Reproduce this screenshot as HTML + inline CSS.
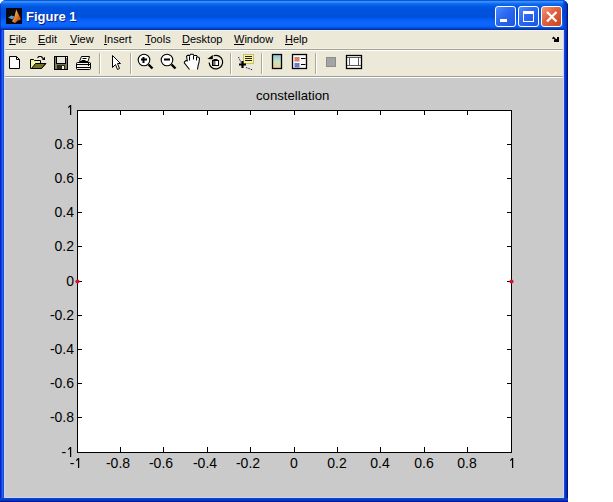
<!DOCTYPE html>
<html><head><meta charset="utf-8">
<style>
*{margin:0;padding:0;box-sizing:border-box}
html,body{width:613px;height:502px;background:#fff;overflow:hidden;position:relative;font-family:"Liberation Sans",sans-serif}
.a{position:absolute}
#win{left:0;top:0;width:568px;height:502px;background:#0831D9;border-radius:6px 6px 0 0;overflow:hidden}
#title{left:0;top:0;width:568px;height:30px;background:linear-gradient(to bottom,#0A58DA 0px,#0A58DA 1px,#3A90FF 1px,#3A90FF 2px,#2C82FA 2px,#2C82FA 3px,#1670F0 3px,#1670F0 4px,#0A66EA 4px,#0A66EA 5px,#0460E6 5px,#0460E6 6px,#025AE4 6px,#025AE4 7px,#0056E2 7px,#0056E2 8px,#0054E0 8px,#0054E0 9px,#0053DF 9px,#0053DF 10px,#0052DE 10px,#0052DE 11px,#0052DE 11px,#0052DE 12px,#0051DD 12px,#0051DD 13px,#0051DD 13px,#0051DD 14px,#0050DC 14px,#0050DC 15px,#0050DC 15px,#0050DC 16px,#0050DE 16px,#0050DE 17px,#0052E2 17px,#0052E2 18px,#0256E8 18px,#0256E8 19px,#045CF0 19px,#045CF0 20px,#0862F8 20px,#0862F8 21px,#0A64FC 21px,#0A64FC 22px,#0A66FF 22px,#0A66FF 23px,#0A66FF 23px,#0A66FF 24px,#0A66FF 24px,#0A66FF 25px,#0A64FC 25px,#0A64FC 26px,#0860F6 26px,#0860F6 27px,#0656E6 27px,#0656E6 28px,#0444C8 28px,#0444C8 29px,#0A2E98 29px,#0A2E98 30px)}
#ttext{left:26px;top:9px;color:#fff;font-weight:bold;font-size:13px;line-height:16px;white-space:nowrap;text-shadow:1px 1px 0 #0A1E82}
.frL{top:30px;height:472px;width:4px;left:0;background:linear-gradient(to right,#0024C8 0,#0024C8 1px,#0C44E4 1px,#0C44E4 2px,#2262F4 2px,#2262F4 3px,#1A4CC8 3px)}
.frR{top:30px;height:472px;width:4px;left:564px;background:linear-gradient(to right,#1048E0 0,#1048E0 1px,#0838D0 1px,#0838D0 2px,#0028B8 2px,#0028B8 3px,#001080 3px)}
.frB{top:498px;height:4px;width:568px;left:0;background:linear-gradient(to bottom,#0A44CC 0,#0A44CC 1px,#0840C8 1px,#0840C8 2px,#0830B8 2px,#0830B8 3px,#001898 3px)}
#client{left:4px;top:30px;width:560px;height:468px;background:#CACACA;border:1px solid #C8D4FA;border-top-color:#F4F6FF}
#menu{left:5px;top:31px;width:558px;height:18px;background:#ECE9D8}
.mi{top:33px;font-size:11px;line-height:13px;color:#000;white-space:nowrap}
.mi u{text-decoration:underline;text-underline-offset:1px;text-decoration-thickness:1px}
#sep1{left:5px;top:48px;width:558px;height:1px;background:#F2EFE4}
#sep2{left:5px;top:49px;width:558px;height:1px;background:#A5A294}
#sep3{left:5px;top:50px;width:558px;height:1px;background:#FFFFFF}
#tool{left:5px;top:51px;width:558px;height:25px;background:#ECE9D8}
#sep4{left:5px;top:76px;width:558px;height:1px;background:#A0A09A}
#sep5{left:5px;top:77px;width:558px;height:1px;background:#FFFFFF}
#fig{left:5px;top:78px;width:558px;height:419px;background:#CACACA}
.tsep{top:53px;width:2px;height:21px;border-left:1px solid #ACA899;border-right:1px solid #FFFFFF}
#axes{left:77px;top:110px;width:435px;height:343px;background:#fff;border:1px solid #000}
.yl{font-size:14px;line-height:14px;color:#000;white-space:nowrap;text-align:right;width:40px}
.xl{font-size:14px;line-height:14px;color:#000;white-space:nowrap;text-align:center;width:40px}
.tk{background:#000}
.one{display:inline-block;vertical-align:baseline}
.btn{top:6px;width:21px;height:21px;border:1px solid #fff;border-radius:3px}
</style></head><body>
<div id="win" class="a">
  <div id="title" class="a"></div>
  <div class="a" style="left:0;top:0;width:1px;height:30px;background:rgba(0,30,180,0.55)"></div>
  <div class="a" style="left:563px;top:0;width:5px;height:30px;background:linear-gradient(to right,rgba(8,56,208,0.5) 0,rgba(8,56,208,0.7) 1px,#0840D0 2px,#0838C8 3px,#0028B0 4px,#001488 4px)"></div>
  <svg class="a" style="left:6px;top:8px" width="16" height="16" viewBox="0 0 16 16">
    <defs><linearGradient id="mg" x1="0" y1="0" x2="1" y2="1"><stop offset="0" stop-color="#FFE08A"/><stop offset="0.45" stop-color="#F08A30"/><stop offset="1" stop-color="#A03010"/></linearGradient></defs>
    <rect width="16" height="16" fill="#08080E"/>
    <path d="M2 9.5 L5.5 7.5 L8.5 8.5 L6.5 11.5 Z" fill="#4E9ED8"/>
    <path d="M10.2 1.5 L15 11.5 L12 12.5 L9 15 L6 13.5 L8.5 8.5 Z" fill="url(#mg)"/>
  </svg>
  <div id="ttext" class="a">Figure 1</div>
  <div class="a btn" style="left:495px;background:linear-gradient(135deg,#4D8BFF 0%,#2A67F2 45%,#1D55E0 100%)"></div>
  <div class="a" style="left:500px;top:19px;width:7px;height:3px;background:#fff"></div>
  <div class="a btn" style="left:518px;background:linear-gradient(135deg,#4D8BFF 0%,#2A67F2 45%,#1D55E0 100%)"></div>
  <div class="a" style="left:523px;top:11px;width:11px;height:11px;border:1px solid #fff;border-top-width:3px"></div>
  <div class="a btn" style="left:541px;background:linear-gradient(135deg,#F2957A 0%,#E06040 45%,#C8451C 100%)"></div>
  <svg class="a" style="left:541px;top:6px" width="21" height="21" viewBox="0 0 21 21"><path d="M6 6 L15.5 15.5 M15.5 6 L6 15.5" stroke="#fff" stroke-width="2.3"/></svg>
  <div class="a frL"></div>
  <div class="a frR"></div>
  <div class="a frB"></div>
  <div id="client" class="a"></div>
  <div id="menu" class="a"></div>
  <div class="a mi" style="left:9px"><u>F</u>ile</div>
  <div class="a mi" style="left:38px"><u>E</u>dit</div>
  <div class="a mi" style="left:70px"><u>V</u>iew</div>
  <div class="a mi" style="left:104px"><u>I</u>nsert</div>
  <div class="a mi" style="left:145px"><u>T</u>ools</div>
  <div class="a mi" style="left:182px"><u>D</u>esktop</div>
  <div class="a mi" style="left:234px"><u>W</u>indow</div>
  <div class="a mi" style="left:285px"><u>H</u>elp</div>
  <svg class="a" style="left:548px;top:34px" width="14" height="12" viewBox="548 34 14 12"><path d="M552.5 38.8 L553.6 37.6 L555.8 39.8" stroke="#000" stroke-width="1.4" fill="none"/><path d="M555 39 H557 V37 H559 V42 H554 V40 Z" fill="#000"/></svg>
<div id="sep1" class="a"></div><div id="sep2" class="a"></div><div id="sep3" class="a"></div>
  <div id="tool" class="a"></div>
  <div id="sep4" class="a"></div><div id="sep5" class="a"></div>
  <div id="fig" class="a"></div>
  <div class="a tsep" style="left:99px"></div>
  <div class="a tsep" style="left:130px"></div>
  <div class="a tsep" style="left:230px"></div>
  <div class="a tsep" style="left:261px"></div>
  <div class="a tsep" style="left:315px"></div>
  <svg class="a" style="left:0;top:50px" width="613" height="28" viewBox="0 50 613 28">
<!-- new -->
<path d="M9.5 56.5 H16.5 L19.5 59.5 V68.5 H9.5 Z" fill="#fff" stroke="#000"/>
<path d="M16.5 56.5 V59.5 H19.5" fill="none" stroke="#000"/>
<!-- open -->
<path d="M30.5 59.5 H33.5 L34.5 60.5 H40.5 V63.5 H46 L41.5 68.5 H30.5 Z" fill="#F2F2A8" stroke="#000"/>
<path d="M35.5 63.5 H45.5 L41.5 68.5 H31.5 Z" fill="#72722A" stroke="#000"/>
<path d="M37.5 57.8 L38.8 56.5 H41.2 L43.2 58.5" fill="none" stroke="#000" stroke-width="1.2"/>
<path d="M41.8 60 H45 V56.8 Z" fill="#000"/>
<!-- save -->
<rect x="54.5" y="56.5" width="13" height="13" fill="#7A7A58" stroke="#000"/>
<rect x="56.5" y="56.5" width="9" height="7" fill="#E6E6DC" stroke="#000"/>
<rect x="57" y="65" width="8" height="4" fill="#2A2A1C"/>
<rect x="62" y="66" width="2" height="3" fill="#F0F0F0"/>
<rect x="66" y="57" width="1" height="1" fill="#fff"/>
<!-- print -->
<path d="M81.5 56.5 H89.5 L88 61.5 H79.5 Z" fill="#fff" stroke="#000"/>
<path d="M82.5 58.5 H86.5 M81.5 60.5 H85.5" stroke="#000"/>
<rect x="76.5" y="62.5" width="14" height="7" rx="1" fill="#F4F4E8" stroke="#000"/>
<path d="M77 64.5 H90 M77 67.5 H90" stroke="#000"/>
<path d="M88.5 63 V69 M90.5 63 V69" stroke="#000" stroke-dasharray="1 1"/>
<!-- pointer -->
<path d="M112.5 55.5 V67.5 L115.5 64.5 L117.5 69.5 L119.5 68.5 L117.5 63.5 H120.5 Z" fill="#fff" stroke="#000" stroke-linejoin="miter"/>
<!-- zoom in -->
<circle cx="144" cy="60" r="5.8" fill="#fff" stroke="#000" stroke-width="1.1"/>
<path d="M141 59.5 H147 M143.5 57 V63" stroke="#000" stroke-width="2"/>
<path d="M148.5 64.5 L152.5 68.5" stroke="#000" stroke-width="2.4"/>
<!-- zoom out -->
<circle cx="167" cy="60" r="5.8" fill="#fff" stroke="#000" stroke-width="1.1"/>
<path d="M164 59.5 H170" stroke="#000" stroke-width="2"/>
<path d="M171.5 64.5 L175.5 68.5" stroke="#000" stroke-width="2.4"/>
<!-- hand -->
<path d="M189.5 69.5 L184.3 62.8 L184.5 61.8 L186 60.5 L187.3 60.8 L186.5 56.3 L188 55.2 L189.5 55.8 L190.5 54.3 L193 54.3 L194 55.5 L196.5 55.6 L197.5 57 L198.8 57.3 L199.5 58.5 L199 62.5 L198 66 L197.5 69.5 Z" fill="#fff"/>
<path d="M189.5 69.5 L184.3 62.8 L184.5 61.8 L186 60.5 L187.3 60.8 L186.5 56.3 L188 55.2 L189.5 55.8 L190.5 54.3 L193 54.3 L194 55.5 L196.5 55.6 L197.5 57 L198.8 57.3 L199.5 58.5 L199 62.5 L198 66 L197.5 69.5" fill="none" stroke="#000" stroke-width="1.05"/>
<path d="M189.5 56.5 V60.5 M193.5 56 V59.5 M196.5 57 V60.5" stroke="#000" stroke-width="1"/>
<!-- rotate -->
<path d="M213.6 55.7 A6.8 6.8 0 1 1 209.1 62.6" fill="none" stroke="#000" stroke-width="1.2"/>
<path d="M207.4 59 L212.8 55 L212.8 59.2 Z" fill="#000"/>
<rect x="212.5" y="60.5" width="6" height="5" fill="#fff" stroke="#000"/>
<rect x="213" y="61" width="2.5" height="4" fill="#6A6A6A"/>
<path d="M213.5 59.5 H217.5" stroke="#000"/>
<!-- data cursor -->
<rect x="243.5" y="54.5" width="10" height="9" fill="#F8F49A" stroke="#C8C070"/>
<path d="M245 56.5 H252 M245 58.5 H252 M245 60.5 H252" stroke="#202020"/>
<path d="M238.5 57 L241 62.5" stroke="#1A1A80" stroke-dasharray="1.5 1"/>
<path d="M246 67.5 L253 70" stroke="#1A1A80" stroke-dasharray="1.5 1"/>
<path d="M239 64.5 H246 M242.5 61 V68" stroke="#000" stroke-width="2.2"/>
<!-- colorbar -->
<defs><linearGradient id="cb" x1="0" y1="0" x2="0" y2="1"><stop offset="0" stop-color="#88C0F0"/><stop offset="0.5" stop-color="#C8E4B8"/><stop offset="1" stop-color="#F2C8A0"/></linearGradient></defs>
<rect x="272.5" y="54.5" width="9" height="14" fill="url(#cb)" stroke="#000" stroke-width="1.3"/>
<!-- legend -->
<rect x="292.5" y="54.5" width="14" height="14" fill="#F8F8F8" stroke="#000" stroke-width="1.3"/>
<rect x="294.5" y="57" width="5" height="4.5" fill="#D8806A"/>
<rect x="294.5" y="63" width="5" height="4.5" fill="#6A7AC4"/>
<path d="M301 58.5 H305.5 M301 64.5 H305.5" stroke="#000" stroke-width="1.2"/>
<!-- hide plot tools -->
<rect x="326.5" y="57.5" width="9" height="9" fill="#A4A4A4" stroke="#8C8C8C"/>
<!-- show plot tools -->
<rect x="346.5" y="55.5" width="15" height="13" fill="#fff" stroke="#000" stroke-width="1.3"/>
<path d="M347 57.5 H361 M349.5 57.5 V65.5 M358.5 57.5 V65.5 M347 65.5 H361" stroke="#5A5A5A"/>
<!-- dock arrow -->
<path d="M552.5 38.5 L554 37.5 L557 40" stroke="#000" fill="none"/>
</svg>

<div id="axes" class="a"></div>
<div class="a tk" style="left:78px;top:144px;width:4px;height:1px"></div>
<div class="a tk" style="left:507px;top:144px;width:4px;height:1px"></div>
<div class="a tk" style="left:78px;top:178px;width:4px;height:1px"></div>
<div class="a tk" style="left:507px;top:178px;width:4px;height:1px"></div>
<div class="a tk" style="left:78px;top:212px;width:4px;height:1px"></div>
<div class="a tk" style="left:507px;top:212px;width:4px;height:1px"></div>
<div class="a tk" style="left:78px;top:246px;width:4px;height:1px"></div>
<div class="a tk" style="left:507px;top:246px;width:4px;height:1px"></div>
<div class="a tk" style="left:78px;top:281px;width:4px;height:1px"></div>
<div class="a tk" style="left:507px;top:281px;width:4px;height:1px"></div>
<div class="a tk" style="left:78px;top:315px;width:4px;height:1px"></div>
<div class="a tk" style="left:507px;top:315px;width:4px;height:1px"></div>
<div class="a tk" style="left:78px;top:349px;width:4px;height:1px"></div>
<div class="a tk" style="left:507px;top:349px;width:4px;height:1px"></div>
<div class="a tk" style="left:78px;top:383px;width:4px;height:1px"></div>
<div class="a tk" style="left:507px;top:383px;width:4px;height:1px"></div>
<div class="a tk" style="left:78px;top:417px;width:4px;height:1px"></div>
<div class="a tk" style="left:507px;top:417px;width:4px;height:1px"></div>
<div class="a tk" style="left:120px;top:447px;width:1px;height:5px"></div>
<div class="a tk" style="left:120px;top:111px;width:1px;height:4px"></div>
<div class="a tk" style="left:163px;top:447px;width:1px;height:5px"></div>
<div class="a tk" style="left:163px;top:111px;width:1px;height:4px"></div>
<div class="a tk" style="left:207px;top:447px;width:1px;height:5px"></div>
<div class="a tk" style="left:207px;top:111px;width:1px;height:4px"></div>
<div class="a tk" style="left:250px;top:447px;width:1px;height:5px"></div>
<div class="a tk" style="left:250px;top:111px;width:1px;height:4px"></div>
<div class="a tk" style="left:294px;top:447px;width:1px;height:5px"></div>
<div class="a tk" style="left:294px;top:111px;width:1px;height:4px"></div>
<div class="a tk" style="left:337px;top:447px;width:1px;height:5px"></div>
<div class="a tk" style="left:337px;top:111px;width:1px;height:4px"></div>
<div class="a tk" style="left:380px;top:447px;width:1px;height:5px"></div>
<div class="a tk" style="left:380px;top:111px;width:1px;height:4px"></div>
<div class="a tk" style="left:424px;top:447px;width:1px;height:5px"></div>
<div class="a tk" style="left:424px;top:111px;width:1px;height:4px"></div>
<div class="a tk" style="left:467px;top:447px;width:1px;height:5px"></div>
<div class="a tk" style="left:467px;top:111px;width:1px;height:4px"></div>
<div class="a yl" style="left:34px;top:103px"><svg class="one" width="7.8" height="10" viewBox="0 0 7.8 10"><path d="M4.6 0 V10 M2.3 2.6 L4.6 0.3" stroke="#000" stroke-width="1.25" fill="none"/></svg></div>
<div class="a yl" style="left:34px;top:137px">0.8</div>
<div class="a yl" style="left:34px;top:171px">0.6</div>
<div class="a yl" style="left:34px;top:205px">0.4</div>
<div class="a yl" style="left:34px;top:239px">0.2</div>
<div class="a yl" style="left:34px;top:274px">0</div>
<div class="a yl" style="left:34px;top:308px">-0.2</div>
<div class="a yl" style="left:34px;top:342px">-0.4</div>
<div class="a yl" style="left:34px;top:376px">-0.6</div>
<div class="a yl" style="left:34px;top:410px">-0.8</div>
<div class="a yl" style="left:34px;top:445px">-<svg class="one" width="7.8" height="10" viewBox="0 0 7.8 10"><path d="M4.6 0 V10 M2.3 2.6 L4.6 0.3" stroke="#000" stroke-width="1.25" fill="none"/></svg></div>
<div class="a xl" style="left:56px;top:456px">-<svg class="one" width="7.8" height="10" viewBox="0 0 7.8 10"><path d="M4.6 0 V10 M2.3 2.6 L4.6 0.3" stroke="#000" stroke-width="1.25" fill="none"/></svg></div>
<div class="a xl" style="left:98px;top:456px">-0.8</div>
<div class="a xl" style="left:141px;top:456px">-0.6</div>
<div class="a xl" style="left:185px;top:456px">-0.4</div>
<div class="a xl" style="left:228px;top:456px">-0.2</div>
<div class="a xl" style="left:274px;top:456px">0</div>
<div class="a xl" style="left:317px;top:456px">0.2</div>
<div class="a xl" style="left:360px;top:456px">0.4</div>
<div class="a xl" style="left:404px;top:456px">0.6</div>
<div class="a xl" style="left:447px;top:456px">0.8</div>
<div class="a xl" style="left:492px;top:456px"><svg class="one" width="7.8" height="10" viewBox="0 0 7.8 10"><path d="M4.6 0 V10 M2.3 2.6 L4.6 0.3" stroke="#000" stroke-width="1.25" fill="none"/></svg></div>
<div class="a" style="left:256px;top:89px;font-size:13.2px;line-height:14px;white-space:nowrap">constellation</div>
<svg class="a" style="left:73px;top:277px" width="10" height="10"><circle cx="4.5" cy="4.5" r="2.1" fill="#D8102C"/></svg>
<svg class="a" style="left:507px;top:277px" width="10" height="10"><circle cx="4.5" cy="4.5" r="2.1" fill="#D8102C"/></svg>
</div>
</body></html>
